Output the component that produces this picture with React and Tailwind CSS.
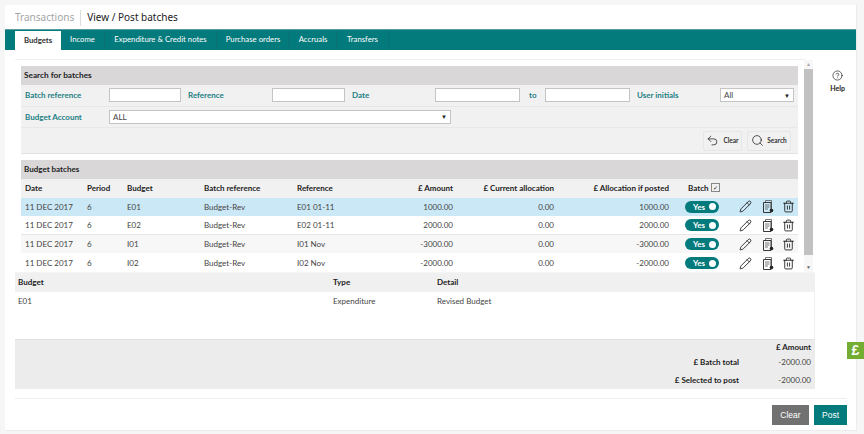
import { Pencil, Trash2, Undo2, Search, CircleHelp } from 'lucide-react'

const rows = [
  { ref: 'E01 01-11', budget: 'E01', amount: '1000.00', alloc: '1000.00', bg: 'bg-[#cbe8f6] pb-[1px]', h: 'h-[18px]' },
  { ref: 'E02 01-11', budget: 'E02', amount: '2000.00', alloc: '2000.00', bg: 'bg-white border-b border-[#e6e6e6]', h: 'h-[19px]' },
  { ref: 'I01 Nov', budget: 'I01', amount: '-3000.00', alloc: '-3000.00', bg: 'bg-[#f7f7f7]', h: 'h-[18px]' },
  { ref: 'I02 Nov', budget: 'I02', amount: '-2000.00', alloc: '-2000.00', bg: 'bg-white pt-[3px]', h: 'h-[17px]' },
]

const cols = 'grid grid-cols-[62px_40px_77px_93px_100px_56px_101px_115px_68px_1fr] items-center'
const tabs = [
  { label: 'Income', w: 'w-[44px]' },
  { label: 'Expenditure & Credit notes', w: 'w-[112px]' },
  { label: 'Purchase orders', w: 'w-[73px]' },
  { label: 'Accruals', w: 'w-[47px]' },
  { label: 'Transfers', w: 'w-[52px]' },
]

function DocIcon() {
  return (
    <svg width="11" height="13" viewBox="0 0 11 13" fill="none" stroke="#222" strokeWidth="0.9">
      <path d="M2.5 2.5V.5h6v9" stroke="#666" />
      <path d="M.5 2.5h7.5v10H.5z" />
      <path d="M2 5h4.5M2 7h4.5M2 9h3" stroke="#666" />
      <circle cx="8.5" cy="10.5" r="1.8" fill="#222" stroke="none" />
    </svg>
  )
}

function Toggle() {
  return (
    <div className="flex h-[12px] w-[34px] items-center justify-between rounded-full bg-[#037a7c] pl-[8px] pr-[3px] text-[8px] font-bold leading-none text-white">
      Yes
      <span className="h-[7px] w-[7px] rounded-full bg-white" />
    </div>
  )
}

function Field({ className }) {
  return <div className={`h-[14px] border border-[#c4c4c4] bg-white ${className}`} />
}

function Label({ children, className = '' }) {
  return <span className={`text-[8px] font-bold text-[#227f84] ${className}`}>{children}</span>
}

export default function App() {
  return (
    <div className="relative h-[434px] w-[864px] overflow-hidden bg-[#f6f6f6] pl-[5px] pt-[5px] font-['Lato',sans-serif] text-[8px] text-[#444]">
      <div className="flex h-[426px] w-[852px] flex-col border-r border-b border-[#ececec] bg-white">
        <div className="flex h-[24px] items-center pl-[10px] pt-[1px] font-['Noto_Sans',sans-serif] text-[10px]">
          <span className="text-[#a5a5a5]">Transactions</span>
          <span className="mx-[6px] h-[16px] w-px bg-[#ddd]" />
          <span className="text-[#222]">View / Post batches</span>
        </div>

        <div className="flex h-[21px] items-end border-t border-[#5c9fa0] bg-[#037a7c] pl-[10px] text-[7.75px] text-white">
          <div className="flex h-[19px] w-[46px] items-center justify-center bg-white font-bold text-[#333]">Budgets</div>
          {tabs.map((t) => (
            <div key={t.label} className={`flex h-[20px] items-center justify-center border-r border-[#0d6f71] ${t.w}`}>{t.label}</div>
          ))}
        </div>

        <div className="flex min-h-0 flex-1">
          <div className="w-[810px] shrink-0 pl-[10px] pt-[9px]">
            <div className="flex h-[213px] w-[790px] flex-col border-t border-[#f0f0f0] pl-[6px] pt-[6px]">
              <div className="flex min-h-0 flex-1">
                <div className="w-[777px] shrink-0">
                  <div className="h-[88px] border-b border-[#e2e2e2] bg-[#f1f1f1]">
                    <div className="flex h-[19px] items-center bg-[#d9d7d8] pl-[3px] text-[8.25px] font-bold text-[#222]">Search for batches</div>
                    <div className="flex h-[22px] items-center border-b border-[#e8e8e8] pb-[1px] pl-[4px]">
                      <Label className="w-[84px]">Batch reference</Label>
                      <Field className="w-[72px]" />
                      <Label className="ml-[7px] w-[84px]">Reference</Label>
                      <Field className="w-[73px]" />
                      <Label className="ml-[7px] w-[83px]">Date</Label>
                      <Field className="w-[85px]" />
                      <Label className="ml-[9px] w-[16px]">to</Label>
                      <Field className="w-[85px]" />
                      <Label className="ml-[7px] w-[83px]">User initials</Label>
                      <div className="flex h-[14px] w-[74px] items-center justify-between border border-[#c4c4c4] bg-white px-[3px] text-[8px]">
                        All <span className="text-[6px] text-[#222]">▼</span>
                      </div>
                    </div>
                    <div className="flex h-[21px] items-center border-b border-[#e8e8e8] pb-[1px] pl-[4px]">
                      <Label className="w-[84px]">Budget Account</Label>
                      <div className="flex h-[14px] w-[342px] items-center justify-between border border-[#c4c4c4] bg-white px-[3px] text-[8px]">
                        ALL <span className="text-[6px] text-[#222]">▼</span>
                      </div>
                    </div>
                    <div className="flex h-[25px] items-center justify-end gap-[5px] pr-[7px]">
                      <div className="flex h-[20px] w-[39px] items-center justify-center gap-[4px] rounded-[2px] border border-[#e6e6e6] text-[6.5px] font-bold text-[#333]">
                        <Undo2 size={13} strokeWidth={1.3} color="#111" /> Clear
                      </div>
                      <div className="flex h-[20px] w-[44px] items-center justify-center gap-[3px] rounded-[2px] border border-[#e6e6e6] text-[6.5px] font-bold text-[#333]">
                        <Search size={13} strokeWidth={1.3} color="#111" /> Search
                      </div>
                    </div>
                  </div>

                  <div className="mt-[6px] flex h-[19px] items-center bg-[#d9d7d8] pb-[1px] pl-[3px] text-[8px] font-bold text-[#222]">Budget batches</div>
                  <div className={`${cols} h-[19px] bg-[#f1f1f1] pb-[2px] pl-[4px] text-[8px] font-bold text-[#222]`}>
                    <span>Date</span>
                    <span>Period</span>
                    <span>Budget</span>
                    <span>Batch reference</span>
                    <span>Reference</span>
                    <span className="text-right">£ Amount</span>
                    <span className="text-right">£ Current allocation</span>
                    <span className="text-right">£ Allocation if posted</span>
                    <span className="flex items-center pl-[19px]">
                      Batch
                      <span className="ml-[2px] flex h-[9px] w-[9px] items-center justify-center border border-[#888] text-[6px] font-normal leading-none">✓</span>
                    </span>
                    <span />
                  </div>
                  {rows.map((r) => (
                    <div key={r.ref} className={`${cols} ${r.h} ${r.bg} overflow-hidden pl-[4px]`}>
                      <span>11 DEC 2017</span>
                      <span>6</span>
                      <span>{r.budget}</span>
                      <span>Budget-Rev</span>
                      <span>{r.ref}</span>
                      <span className="text-right">{r.amount}</span>
                      <span className="text-right">0.00</span>
                      <span className="text-right">{r.alloc}</span>
                      <span className="pl-[16px]"><Toggle /></span>
                      <span className="flex items-center pl-[2px]">
                        <Pencil size={13} strokeWidth={1.5} color="#111" />
                        <span className="ml-[11px] flex"><DocIcon /></span>
                        <span className="ml-[8px] flex"><Trash2 size={13} strokeWidth={1.5} color="#111" /></span>
                      </span>
                    </div>
                  ))}
                </div>
                <div className="-mt-[6px] ml-[6px] flex w-[10px] flex-col items-center bg-[#f7f7f7]">
                  <span className="h-[9px] text-[5px] leading-[9px] text-[#aaa]">▲</span>
                  <div className="h-[186px] w-[9px] bg-[#c1c1c1]" />
                  <span className="mt-auto h-[10px] text-[5px] leading-[10px] text-[#666]">▼</span>
                </div>
              </div>
            </div>

            <div className="w-[800px]">
              <div className="grid h-[20px] grid-cols-[315px_104px_1fr] items-center border-t border-[#f4f4f4] bg-[#f0f0f0] pb-[2px] pl-[3px] text-[8px] font-bold text-[#222]">
                <span>Budget</span>
                <span>Type</span>
                <span>Detail</span>
              </div>
              <div className="grid h-[47px] grid-cols-[315px_104px_1fr] border-r border-[#f0f0f0] pl-[3px] pt-[3px]">
                <span>E01</span>
                <span>Expenditure</span>
                <span>Revised Budget</span>
              </div>
              <div className="h-[50px] border-t border-[#e2e2e2] bg-[#ececec] pr-[4px] text-right">
                <div className="pt-[1px] text-[8px] font-bold leading-[13px] text-[#222]">£ Amount</div>
                <div className="flex h-[18px] items-center justify-end pb-[2px]">
                  <span className="text-[8px] font-bold text-[#222]">£ Batch total</span>
                  <span className="w-[72px]">-2000.00</span>
                </div>
                <div className="flex h-[18px] items-center justify-end pb-[2px]">
                  <span className="text-[8px] font-bold text-[#222]">£ Selected to post</span>
                  <span className="w-[72px]">-2000.00</span>
                </div>
              </div>
            </div>
          </div>

          <div className="flex flex-1 flex-col items-center pl-[4px] pt-[20px] text-[7px] font-bold text-[#222]">
            <CircleHelp size={11} strokeWidth={1.4} color="#111" />
            <span className="mt-[2px]">Help</span>
          </div>
        </div>

        <div className="mx-[10px] flex h-[32px] w-[832px] items-start justify-end gap-[5px] border-t border-[#eeeeee] pt-[6px] font-['Liberation_Sans',sans-serif] text-[8.5px] text-white">
          <div className="flex h-[20px] w-[37px] items-center justify-center bg-[#717171]">Clear</div>
          <div className="flex h-[20px] w-[33px] items-center justify-center bg-[#037a7c]">Post</div>
        </div>
      </div>

      <div className="absolute left-[847px] top-[342px] flex h-[17px] w-[17px] items-center justify-center bg-[#73ad32] font-['Liberation_Sans',sans-serif] text-[14px] font-bold text-white">£</div>
    </div>
  )
}
